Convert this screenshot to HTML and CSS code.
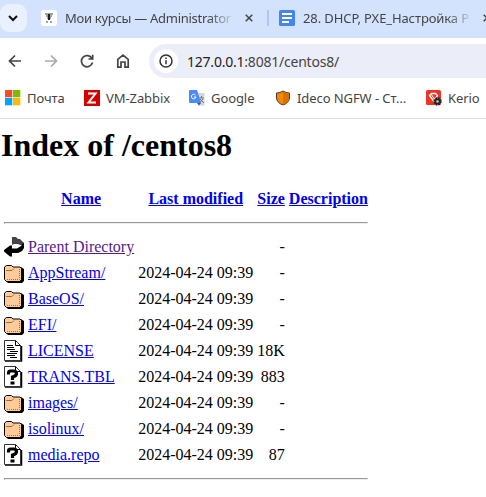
FILE: index.html
```html
<!DOCTYPE html>
<html lang="ru">
<head>
<meta charset="utf-8">
<title>Index of /centos8</title>
<link rel="stylesheet" href="styles.css">
</head>
<body>
<svg class="defs" aria-hidden="true">
  <symbol id="folder" viewBox="0 0 20 22">
    <path d="M3 5H17L20 7V19L18 21H4L2 19Z" fill="#000"/>
    <path d="M.5 17.500V5L2.500 3.500H7.500L9 5H16L17.500 6.500V17.500L16 19.500H2.500Z" fill="#fc9" stroke="#000"/>
    <path d="M2 8.500H8L10 6.500" stroke="#a66b3d" fill="none"/>
    <path d="M3 17.500H15.500V7" stroke="#a66b3d" stroke-dasharray="1 1" fill="none"/>
  </symbol>
  <symbol id="page" viewBox="0 0 20 22">
    <path d="M1 21H17.500V6" stroke="#000" stroke-width="1.500" fill="none"/>
    <path d="M.5.500H11.500L16.500 5.500V20.500H.5Z" fill="#fff" stroke="#333"/>
    <path d="M11.500.500V5.500H16.500" fill="none" stroke="#000"/>
  </symbol>
  <symbol id="unknown" viewBox="0 0 20 22">
    <use href="#page" width="20" height="22"/>
    <path d="M4.500 8.500V7Q4.500 5 6.500 5H9.500Q12.500 5 12.500 7.500T8.500 11V14M6.500 17h4" fill="none" stroke="#000" stroke-width="3.200"/>
  </symbol>
</svg>
<header class="browser">
  <div class="tabs">
    <span class="search"><svg width="27" height="28" viewBox="0 0 27 28"><path d="M9 12l4 4 4-4" fill="none" stroke="#111" stroke-width="2"/></svg></span>
    <svg class="favicon" width="16" height="16" viewBox="0 0 16 16"><rect width="16" height="16" rx="3" fill="#fff"/><path d="M4 4h8M5 6h2m2 0h2M6 8h4M5 12h2m2 0h2" stroke="#444" stroke-width="1.200" fill="none"/><path d="M8 4v6" stroke="#222" stroke-width="2"/></svg>
    <span class="tab-title first">Мои курсы — Administrator</span>
    <svg class="close" width="8" height="8" viewBox="0 0 8 8"><path d="M.7.700l6.600 6.600m0-6.600L.7 7.300" stroke="#444" stroke-width="1.500"/></svg>
    <span class="divider"></span>
    <svg class="favicon" width="16" height="16" viewBox="0 0 16 16"><rect width="16" height="16" rx="1.500" fill="#4285f4"/><path d="M3 4h10M3 8h10M3 12h7" stroke="#fff" stroke-width="2"/></svg>
    <span class="tab-title second">28. DHCP, PXE_Настройка P</span>
    <svg class="close" width="8" height="8" viewBox="0 0 8 8"><path d="M.7.700l6.600 6.600m0-6.600L.7 7.300" stroke="#444" stroke-width="1.500"/></svg>
  </div>
  <div class="toolbar">
    <div class="nav">
      <svg width="14" height="14" viewBox="0 0 14 14"><path d="M13 7H2M7 1.500L1.500 7 7 12.500" fill="none" stroke="#444" stroke-width="1.700"/></svg>
      <svg width="14" height="14" viewBox="0 0 14 14"><path d="M1 7h11M7 1.500L12.500 7 7 12.500" fill="none" stroke="#aaa" stroke-width="1.700"/></svg>
      <svg width="14" height="14" viewBox="0 0 14 14"><path d="M12 4.500A5.600 5.600 0 1 0 12.500 8.500M12.700.800V5H8.500" fill="none" stroke="#444" stroke-width="1.700"/></svg>
      <svg width="14" height="14" viewBox="0 0 14 14"><path d="M1.800 5.300L7 1.200l5.200 4.100v7.900H9V8H5v5.200H1.800Z" fill="none" stroke="#444" stroke-width="1.700"/></svg>
    </div>
    <div class="address">
      <span class="info"><svg width="14" height="14" viewBox="0 0 14 14"><circle cx="7" cy="7" r="6" fill="none" stroke="#333" stroke-width="1.500"/><path d="M7 3.500v1.500M7 6.300v4" stroke="#333" stroke-width="1.500"/></svg></span>
      <span class="url"><b>127.0.0.1</b>:8081/centos8/</span>
    </div>
  </div>
  <nav class="bookmarks">
    <svg class="bi" width="16" height="16" viewBox="0 0 16 16"><path d="M0 0h7.300v7.300H0Z" fill="#f25022"/><path d="M8 0h7.300v7.300H8Z" fill="#7fba00"/><path d="M0 8h7.300v7.300H0Z" fill="#00a4ef"/><path d="M8 8h7.300v7.300H8Z" fill="#ffb900"/></svg>
    <span class="mail">Почта</span>
    <svg class="bi" width="16" height="16" viewBox="0 0 16 16"><path d="M0 0h16v16H0Z" fill="#d40000"/><path d="M4 3.500h7.500L4.500 12.500H12" fill="none" stroke="#fff" stroke-width="2"/></svg>
    <span class="zabbix">VM-Zabbix</span>
    <svg class="bi" width="16" height="16" viewBox="0 0 16 16"><path d="M6 3h9.500v12.500H9Z" fill="#d5d7da"/><path d="M1 0h7l4 13H1Q0 13 0 12V1Q0 0 1 0Z" fill="#4c8bf5"/><path d="M8 13h4l-2 2.500Z" fill="#2858b8"/><path d="M6.500 5A2.300 2.300 0 1 0 7 7H5" fill="none" stroke="#fff"/><path d="M10 8h5m-2.500-2v2m-2 5l3.500-4m-3 0l4 4" stroke="#667b86" fill="none"/></svg>
    <span class="google">Google</span>
    <svg class="bi" width="16" height="16" viewBox="0 0 16 16"><path d="M8 1Q11 3 14.500 3V8Q14 13 8 15Q2 13 1.500 8V3Q5 3 8 1Z" fill="#f08a00" stroke="#4d3b28"/><path d="M8 1.500Q11 3.500 14 3.500V8Q13 13 8 14.500Z" fill="#d96f00"/></svg>
    <span class="ideco">Ideco NGFW - Ст…</span>
    <svg class="bi" width="16" height="16" viewBox="0 0 16 16"><rect width="15" height="15" rx="1.500" fill="#ee3524"/><path d="M3.500 5.500l2-2h4l2 2-4 5.500Z" fill="none" stroke="#fff" stroke-width="1.300"/><path d="M5 4l4 6" stroke="#fff"/><circle cx="11.500" cy="11.500" r="3.300" fill="#ccc" stroke="#222" stroke-width="1.800" stroke-dasharray="1.700 .9"/><circle cx="11.500" cy="11.500" r="2.200" fill="none" stroke="#222" stroke-width="1.800"/></svg>
    <span class="kerio">Kerio</span>
  </nav>
</header>
<main>
<h1>Index of /centos8</h1>
<table>
<tr class="head"><th></th><th><a href="#">Name</a></th><th><a href="#">Last modified</a></th><th><a href="#">Size</a></th><th><a href="#">Description</a></th></tr>
<tr><th colspan="5"><hr class="top"></th></tr>
<tr><td><svg class="icon" viewBox="0 0 20 22"><path d="M8 1H12L14 3H16L19 6V9H16L14 8H10L8 9Z" fill="#444"/><path d="M19.500 6L20 8V12L18 15 14 17H8V20.500H6L0 15.500V14L6 9.500H8V12.500H13L17 10Z" fill="#000"/></svg></td><td><a class="visited" href="#">Parent Directory</a></td><td></td><td class="size">-</td><td></td></tr>
<tr><td><svg class="icon"><use href="#folder"/></svg></td><td><a href="#">AppStream/</a></td><td>2024-04-24 09:39</td><td class="size">-</td><td></td></tr>
<tr><td><svg class="icon"><use href="#folder"/></svg></td><td><a href="#">BaseOS/</a></td><td>2024-04-24 09:39</td><td class="size">-</td><td></td></tr>
<tr><td><svg class="icon"><use href="#folder"/></svg></td><td><a href="#">EFI/</a></td><td>2024-04-24 09:39</td><td class="size">-</td><td></td></tr>
<tr><td><svg class="icon"><use href="#page"/><path d="M3 5.500h6M3 7.500h7M3 9.500h8M6 11.500h8M3 13.500h10M3 15.500h8M6 17.500h7" stroke="#000"/></svg></td><td><a href="#">LICENSE</a></td><td>2024-04-24 09:39</td><td class="size">18K</td><td></td></tr>
<tr><td><svg class="icon"><use href="#unknown"/></svg></td><td><a href="#">TRANS.TBL</a></td><td>2024-04-24 09:39</td><td class="size">883</td><td></td></tr>
<tr><td><svg class="icon"><use href="#folder"/></svg></td><td><a href="#">images/</a></td><td>2024-04-24 09:39</td><td class="size">-</td><td></td></tr>
<tr><td><svg class="icon"><use href="#folder"/></svg></td><td><a href="#">isolinux/</a></td><td>2024-04-24 09:39</td><td class="size">-</td><td></td></tr>
<tr><td><svg class="icon"><use href="#unknown"/></svg></td><td><a href="#">media.repo</a></td><td>2024-04-24 09:39</td><td class="size">87</td><td></td></tr>
<tr><th colspan="5"><hr></th></tr>
</table>
</main>
</body>
</html>
```
FILE: styles.css
```css
body { margin: 0; height: 497px; overflow: hidden; background: #fff; font-family: "Liberation Serif", serif; font-size: 16px; }
.defs { display: block; width: 0; height: 0; }
.browser { height: 118px; border-bottom: 1px solid #dcdcdc; overflow: hidden; font-family: "Noto Sans", sans-serif; font-size: 13px; color: #444; }
.browser svg { display: block; flex: none; }
.browser span { white-space: nowrap; flex: none; }
.tabs { display: flex; align-items: center; height: 38px; box-sizing: border-box; padding-bottom: 2px; background: #d3e2fd; }
.search { width: 27px; height: 28px; border-radius: 9px; background: #e9f0fe; }
.favicon { margin-left: 14px; }
.tab-title { margin-left: 8px; mask-image: linear-gradient(90deg, #000 86%, transparent 102%); }
.first { width: 167px; letter-spacing: -0.28px; }
.second { width: 167px; letter-spacing: -0.1px; }
.close { margin-left: 13px; }
.divider { width: 2px; height: 16px; margin-left: 14px; background: #a8c7fa; }
.divider + .favicon { margin-left: 10px; }
.toolbar { display: flex; align-items: center; height: 46px; }
.nav { display: flex; gap: 22px; padding-left: 8px; }
.address { display: flex; align-items: center; flex: 1; height: 34px; margin-left: 19px; padding-left: 5px; border-radius: 17px 0 0 17px; background: #ebeef8; font-size: 14px; }
.info { width: 24px; height: 24px; display: grid; place-items: center; border-radius: 50%; background: #fff; }
.url { margin-left: 9px; letter-spacing: -0.22px; }
.url b { font-weight: 400; color: #222; }
.bookmarks { display: flex; align-items: center; height: 28px; padding-left: 5px; letter-spacing: -0.08px; }
.bookmarks span { margin-left: 6px; }
.mail { width: 57px; }
.zabbix { width: 83px; }
.google { width: 64px; }
.ideco { width: 129px; }
main { padding-left: 1px; }
h1 { margin: 8px 0 23px; font-size: 32px; line-height: 37px; }
table { border-collapse: separate; border-spacing: 2px; }
th, td { padding: 1px; white-space: nowrap; }
td { height: 22px; line-height: 18px; }
a { color: #0000ee; }
.visited { color: #551a8b; }
hr { margin: 8px 0; }
hr.top { margin-top: 10px; }
.size { text-align: right; }
.icon { display: block; width: 20px; height: 22px; }
```
